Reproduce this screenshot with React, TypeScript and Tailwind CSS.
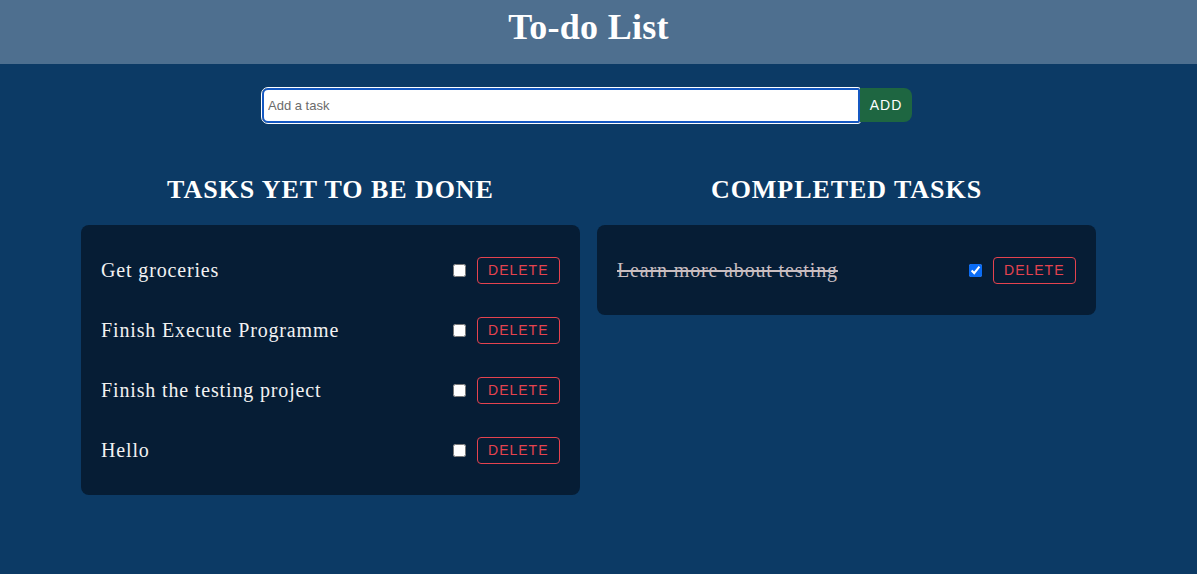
import React, { useState } from 'react';

type Task = { id: number; text: string; done: boolean };

const initialTasks: Task[] = [
  { id: 1, text: 'Get groceries', done: false },
  { id: 2, text: 'Finish Execute Programme', done: false },
  { id: 3, text: 'Finish the testing project', done: false },
  { id: 4, text: 'Hello', done: false },
  { id: 5, text: 'Learn more about testing', done: true },
];

function TaskRow({
  task,
  onToggle,
  onDelete,
}: {
  task: Task;
  onToggle: () => void;
  onDelete: () => void;
}) {
  return (
    <li className="h-[60px] flex items-center justify-between">
      <span
        className={`font-['Liberation_Serif',serif] text-[20px] tracking-[0.85px] ${
          task.done ? 'text-[#c9bec1] line-through' : 'text-[#f2f2f2]'
        }`}
      >
        {task.text}
      </span>
      <div className="flex items-center">
        <input
          type="checkbox"
          checked={task.done}
          onChange={onToggle}
          className="w-[13px] h-[13px] mr-[11px] accent-[#0a6cf5]"
        />
        <button
          onClick={onDelete}
          className="h-[27px] px-[10.5px] border border-[#e4434f] rounded-[4px] text-[#e4434f] font-['Liberation_Sans',sans-serif] text-[14px] tracking-[1px] leading-none bg-transparent"
        >
          DELETE
        </button>
      </div>
    </li>
  );
}

export default function App() {
  const [tasks, setTasks] = useState<Task[]>(initialTasks);
  const [text, setText] = useState('');

  const toggle = (id: number) =>
    setTasks((ts) => ts.map((t) => (t.id === id ? { ...t, done: !t.done } : t)));
  const remove = (id: number) => setTasks((ts) => ts.filter((t) => t.id !== id));
  const add = () => {
    if (!text.trim()) return;
    setTasks((ts) => [...ts, { id: Date.now(), text: text.trim(), done: false }]);
    setText('');
  };

  const pending = tasks.filter((t) => !t.done);
  const completed = tasks.filter((t) => t.done);

  return (
    <div className="min-h-[574px] bg-[#0c3a65] font-['Liberation_Serif',serif]">
      {/* Header */}
      <header className="h-16 bg-[#4e6f8f] pr-[20px] pt-[7px] text-center">
        <h1 className="text-[36px] leading-[40px] font-bold tracking-[0.3px] text-white">To-do List</h1>
      </header>

      <main className="pr-[20px]">
        {/* Add form */}
        <div className="flex justify-center mt-[24px] pr-[3px]">
          <input
            value={text}
            onChange={(e) => setText(e.target.value)}
            placeholder="Add a task"
            className="w-[598px] h-[35px] bg-white rounded-l-[6px] rounded-r-[2px] border-2 border-[#1558c2] outline outline-1 outline-white px-[4px] font-['Liberation_Sans',sans-serif] text-[13px] text-gray-800 placeholder:text-[#6b6b6b]"
          />
          <button
            onClick={add}
            className="w-[52px] h-[34px] bg-[#1e6641] rounded-r-[8px] text-white font-['Liberation_Sans',sans-serif] text-[14px] tracking-[1px]"
          >
            ADD
          </button>
        </div>

        {/* Columns */}
        <div className="flex justify-center gap-[17px] mt-[52px]">
          <section className="w-[499px]">
            <h2 className="text-center text-[26px] leading-[30px] font-bold tracking-[0.95px] text-white mb-[20px]">
              TASKS YET TO BE DONE
            </h2>
            <ul className="bg-[#061d35] rounded-[8px] py-[15px] px-[20px]">
              {pending.map((t) => (
                <TaskRow key={t.id} task={t} onToggle={() => toggle(t.id)} onDelete={() => remove(t.id)} />
              ))}
            </ul>
          </section>

          <section className="w-[499px]">
            <h2 className="text-center text-[26px] leading-[30px] font-bold tracking-[0.95px] text-white mb-[20px]">
              COMPLETED TASKS
            </h2>
            <ul className="bg-[#061d35] rounded-[8px] py-[15px] px-[20px]">
              {completed.map((t) => (
                <TaskRow key={t.id} task={t} onToggle={() => toggle(t.id)} onDelete={() => remove(t.id)} />
              ))}
            </ul>
          </section>
        </div>
      </main>
    </div>
  );
}
